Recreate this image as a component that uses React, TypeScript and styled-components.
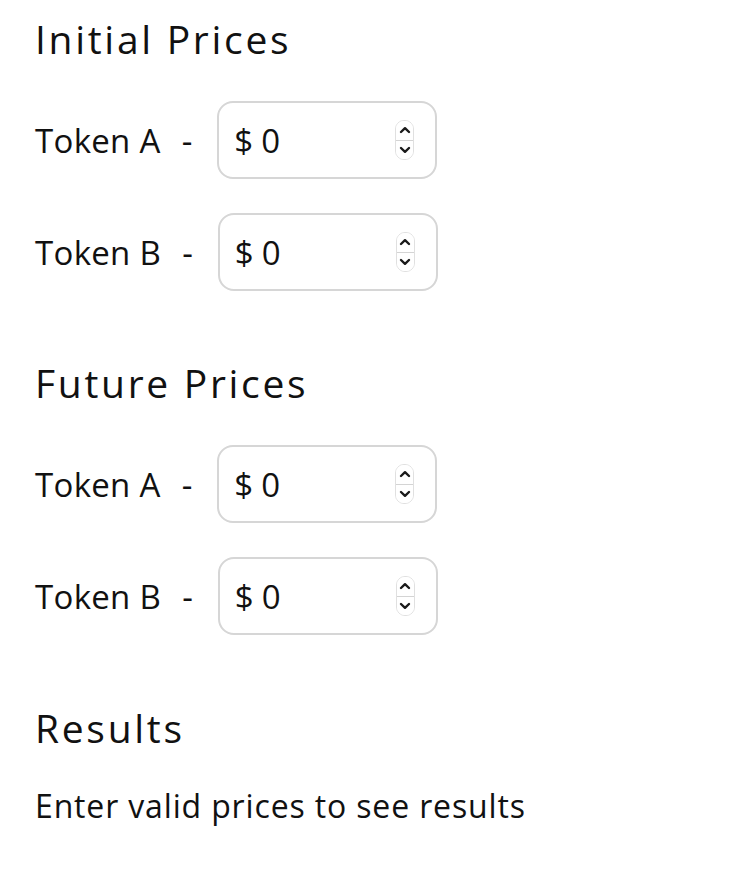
import React, { useState } from 'react';
import styled, { createGlobalStyle } from 'styled-components';

const GlobalStyle = createGlobalStyle`
  html, body {
    margin: 0;
    padding: 0;
    background: #ffffff;
  }
  body {
    font-family: "Open Sans", "Noto Sans", sans-serif;
    color: #111111;
  }
`;

const Page = styled.div`
  display: flex;
  flex-direction: column;
  padding: 14px 35px 40px;
`;

const Section = styled.section<{ $gapAfter: number }>`
  display: flex;
  flex-direction: column;
  margin-bottom: ${(p) => p.$gapAfter}px;
`;

const Heading = styled.h2`
  margin: 0 0 37px;
  height: 50px;
  line-height: 50px;
  font-size: 39px;
  font-weight: 500;
  letter-spacing: 2.7px;
`;

const ResultsHeading = styled(Heading)`
  margin-bottom: 33px;
`;

const Rows = styled.div`
  display: flex;
  flex-direction: column;
  gap: 34px;
`;

const Row = styled.div`
  display: flex;
  align-items: center;
  height: 78px;
`;

const Label = styled.span`
  font-size: 33px;
  letter-spacing: 0.3px;
`;

const Dash = styled.span`
  font-size: 33px;
  margin: 0 25px 0 21px;
`;

const InputBox = styled.label`
  box-sizing: border-box;
  display: flex;
  align-items: center;
  width: 220px;
  height: 78px;
  padding: 0 21px 0 15px;
  border: 2px solid #d6d6d6;
  border-radius: 16px;
`;

const Currency = styled.span`
  font-size: 33px;
  margin-right: 8px;
`;

const NumberField = styled.input`
  flex: 1;
  min-width: 0;
  border: none;
  outline: none;
  padding: 0;
  background: transparent;
  font-family: inherit;
  font-size: 33px;
  color: #111111;
  -moz-appearance: textfield;
  &::-webkit-inner-spin-button,
  &::-webkit-outer-spin-button {
    -webkit-appearance: none;
    margin: 0;
  }
`;

const Spinner = styled.div`
  box-sizing: border-box;
  display: flex;
  flex-direction: column;
  width: 19px;
  height: 40px;
  border: 1px solid #e0e0e0;
  border-radius: 9px;
  overflow: hidden;
`;

const SpinHalf = styled.button<{ $top?: boolean }>`
  flex: 1;
  display: flex;
  align-items: center;
  justify-content: center;
  padding: 0;
  border: none;
  background: #ffffff;
  border-bottom: ${(p) => (p.$top ? '1px solid #d4d4d4' : 'none')};
  cursor: pointer;
`;

const Note = styled.p`
  margin: 0;
  line-height: 40px;
  font-size: 32px;
  letter-spacing: 0.85px;
`;

const Chevron = ({ up }: { up?: boolean }) => (
  <svg width="12" height="8" viewBox="0 0 12 8">
    <path
      d={up ? 'M2 6 L6 2.2 L10 6' : 'M2 2 L6 5.8 L10 2'}
      fill="none"
      stroke="#1a1a1a"
      strokeWidth="2.4"
      strokeLinecap="round"
      strokeLinejoin="round"
    />
  </svg>
);

const PriceInput = ({ value, onChange }: { value: number; onChange: (v: number) => void }) => (
  <InputBox>
    <Currency>$</Currency>
    <NumberField
      type="number"
      value={value}
      onChange={(e) => onChange(Number(e.target.value))}
    />
    <Spinner>
      <SpinHalf $top type="button" onClick={() => onChange(value + 1)}>
        <Chevron up />
      </SpinHalf>
      <SpinHalf type="button" onClick={() => onChange(Math.max(0, value - 1))}>
        <Chevron />
      </SpinHalf>
    </Spinner>
  </InputBox>
);

const PriceRow = ({ label, value, onChange }: { label: string; value: number; onChange: (v: number) => void }) => (
  <Row>
    <Label>{label}</Label>
    <Dash>-</Dash>
    <PriceInput value={value} onChange={onChange} />
  </Row>
);

const App = () => {
  const [initA, setInitA] = useState(0);
  const [initB, setInitB] = useState(0);
  const [futA, setFutA] = useState(0);
  const [futB, setFutB] = useState(0);

  return (
    <Page>
      <GlobalStyle />
      <Section $gapAfter={67}>
        <Heading>Initial Prices</Heading>
        <Rows>
          <PriceRow label="Token A" value={initA} onChange={setInitA} />
          <PriceRow label="Token B" value={initB} onChange={setInitB} />
        </Rows>
      </Section>
      <Section $gapAfter={68}>
        <Heading>Future Prices</Heading>
        <Rows>
          <PriceRow label="Token A" value={futA} onChange={setFutA} />
          <PriceRow label="Token B" value={futB} onChange={setFutB} />
        </Rows>
      </Section>
      <Section $gapAfter={0}>
        <ResultsHeading>Results</ResultsHeading>
        <Note>Enter valid prices to see results</Note>
      </Section>
    </Page>
  );
};

export default App;
